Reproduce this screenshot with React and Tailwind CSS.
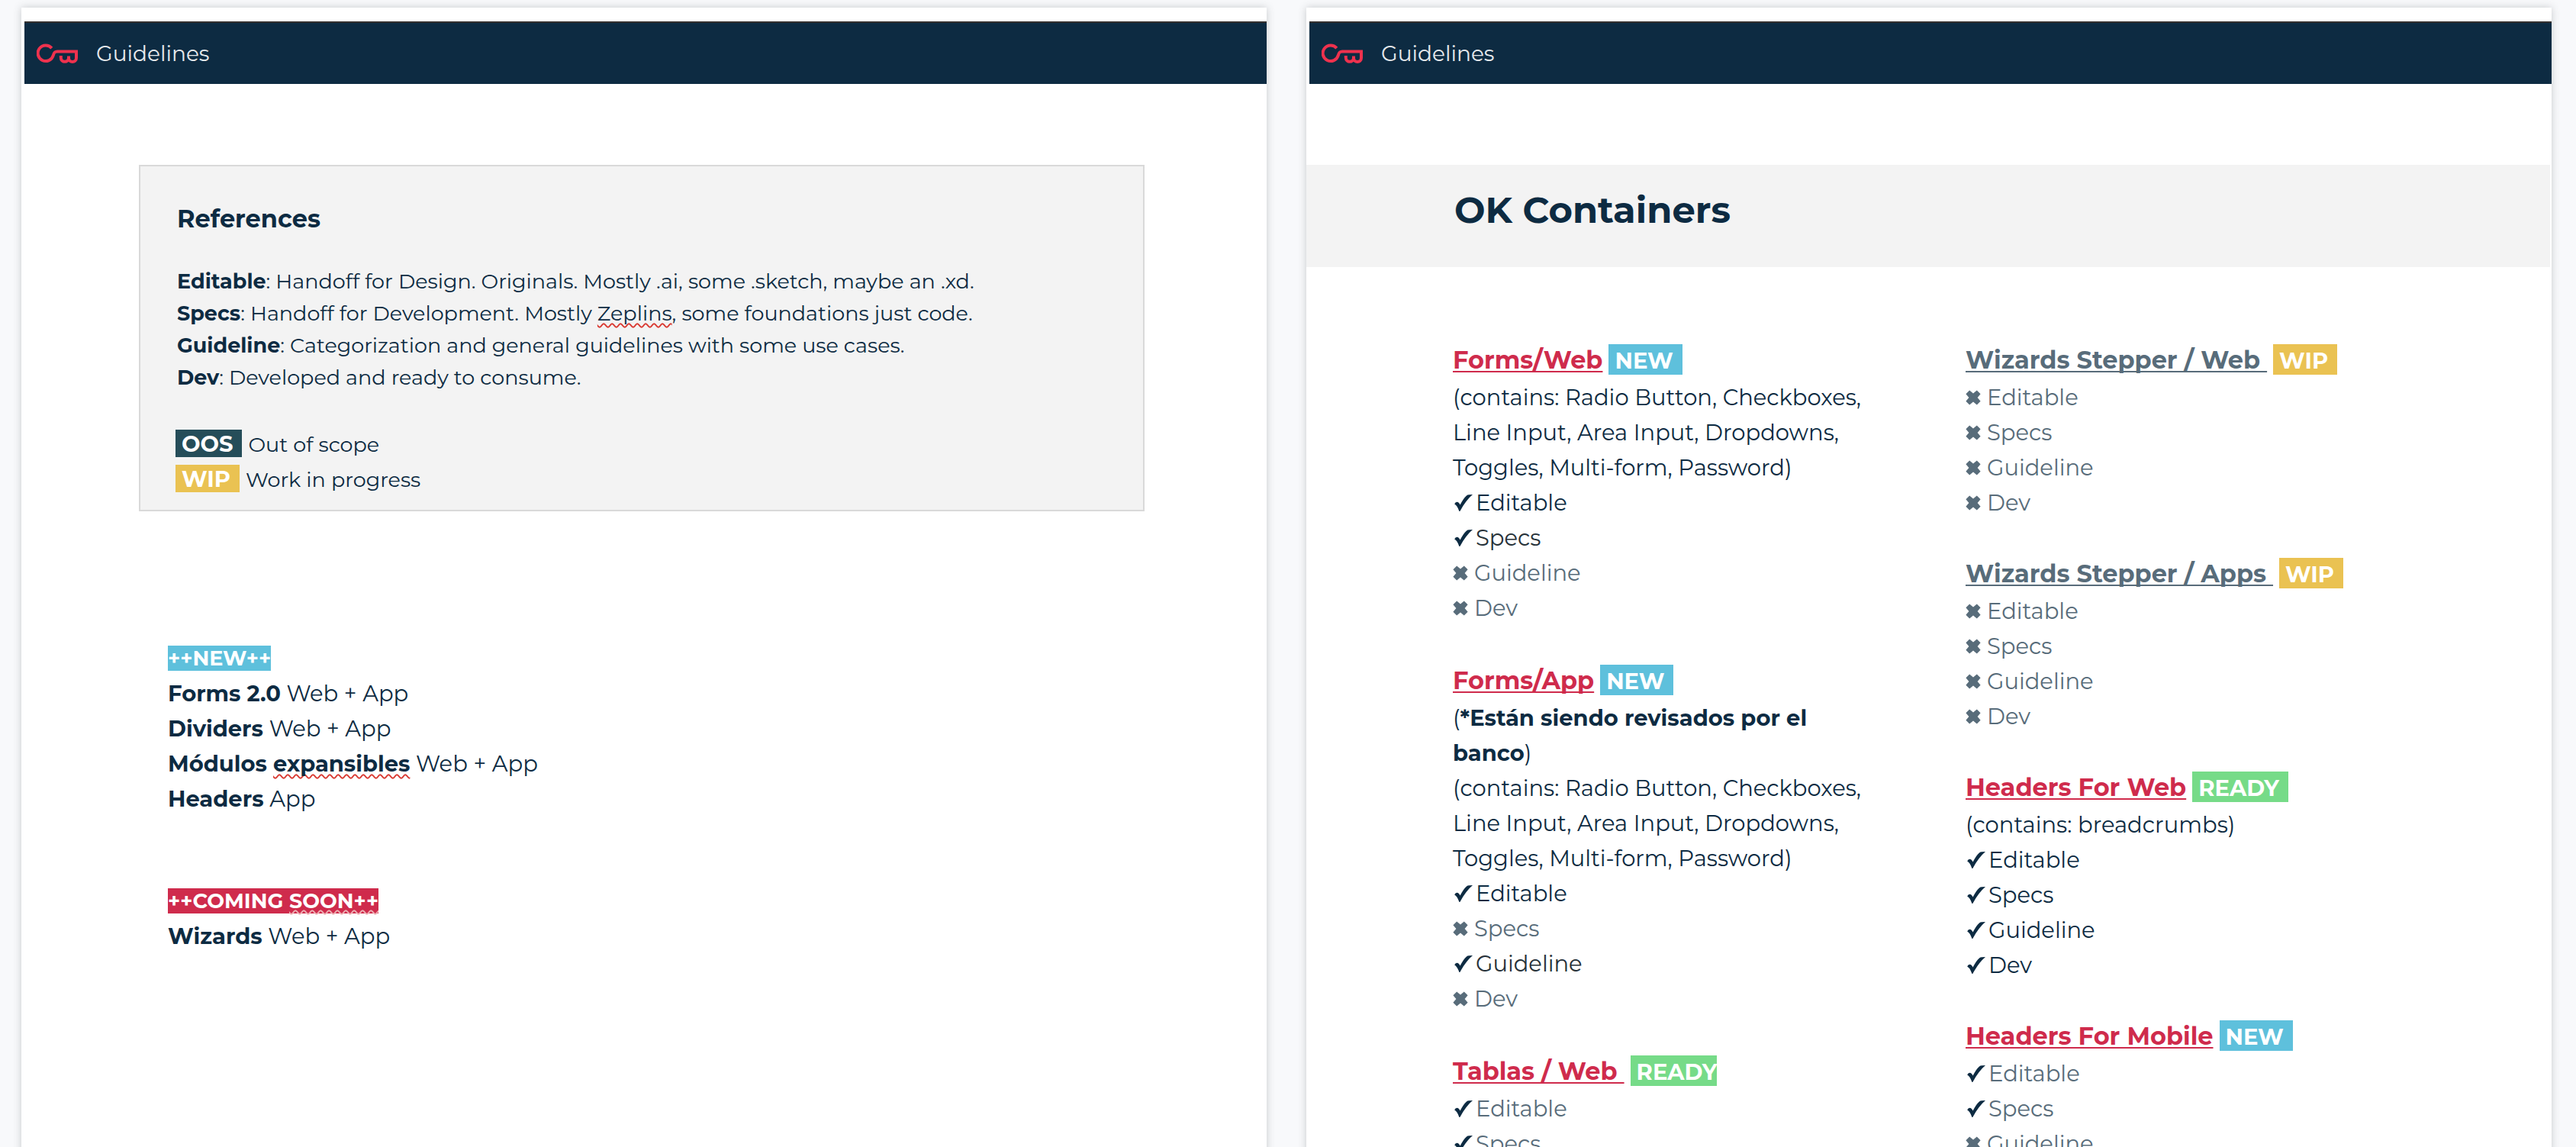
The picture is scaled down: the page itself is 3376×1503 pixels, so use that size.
const TONES = {
  navy: "text-[#0d2b42]",
  dark: "text-[#263138]",
  grey: "text-[#586c7a]",
  red: "text-[#cf2b4c]",
};

const BADGES = {
  NEW: "bg-[#5ec0dc]",
  READY: "bg-[#76db88]",
  WIP: "bg-[#eac252]",
};

const CONTAINS =
  "(contains: Radio Button, Checkboxes, Line Input, Area Input, Dropdowns, Toggles, Multi-form, Password)";

const LEFT_GROUPS = [
  {
    title: "Forms/Web",
    badge: "NEW",
    tone: "red",
    notes: [CONTAINS],
    items: [
      ["Editable", true, "navy"],
      ["Specs", true, "dark"],
      ["Guideline", false, "grey"],
      ["Dev", false, "grey"],
    ],
  },
  {
    title: "Forms/App",
    badge: "NEW",
    tone: "red",
    notes: [
      <>
        (<b>*Están siendo revisados por el banco</b>)
      </>,
      CONTAINS,
    ],
    items: [
      ["Editable", true, "navy"],
      ["Specs", false, "grey"],
      ["Guideline", true, "dark"],
      ["Dev", false, "grey"],
    ],
  },
  {
    title: "Tablas / Web ",
    badge: "READY",
    flush: true,
    tone: "red",
    notes: [],
    items: [
      ["Editable", true, "grey"],
      ["Specs", true, "grey"],
    ],
  },
];

const RIGHT_GROUPS = [
  {
    title: "Wizards Stepper / Web ",
    badge: "WIP",
    tone: "grey",
    notes: [],
    items: [
      ["Editable", false, "grey"],
      ["Specs", false, "grey"],
      ["Guideline", false, "grey"],
      ["Dev", false, "grey"],
    ],
  },
  {
    title: "Wizards Stepper / Apps ",
    badge: "WIP",
    tone: "grey",
    notes: [],
    items: [
      ["Editable", false, "grey"],
      ["Specs", false, "grey"],
      ["Guideline", false, "grey"],
      ["Dev", false, "grey"],
    ],
  },
  {
    title: "Headers For Web",
    badge: "READY",
    tone: "red",
    notes: ["(contains: breadcrumbs)"],
    items: [
      ["Editable", true, "navy"],
      ["Specs", true, "navy"],
      ["Guideline", true, "navy"],
      ["Dev", true, "navy"],
    ],
  },
  {
    title: "Headers For Mobile",
    badge: "NEW",
    tone: "red",
    notes: [],
    items: [
      ["Editable", true, "grey"],
      ["Specs", true, "grey"],
      ["Guideline", false, "grey"],
    ],
  },
];

function KeyLogo() {
  return (
    <svg
      className="h-[26px] w-[54px] shrink-0"
      viewBox="0 0 54 26"
      fill="none"
      stroke="#ee324e"
      strokeWidth="4"
      aria-hidden="true"
    >
      <path d="M19.8 6.1A10.3 10.3 0 1 0 21.9 15.3C22.8 12 23.6 10.6 27 10.6H52V19C52 25.6 42 25.6 42 19V16.5" />
      <path d="M31.8 16V18.5C31.8 25.6 42 25.6 42 18.5" />
    </svg>
  );
}

function Check() {
  return (
    <svg className="ml-0.5 h-[22px] w-6" viewBox="0 0 24 22" fill="#0d2b42" role="img" aria-label="Done">
      <path d="M.2 12.6Q1.2 10 3.4 9.8Q6 9.8 7.6 13.6Q12 4.6 16 1.4Q17.4 .2 19.2 .2L24 .1Q15.4 7.4 7.6 21.4Q6.8 22.4 6.2 21.4Q3.6 14.4 .2 12.6Z" />
    </svg>
  );
}

function Cross() {
  return (
    <svg className="h-5 w-5" viewBox="0 0 20 20" fill="#586c7a" role="img" aria-label="Missing">
      <path d="M5.2 .4L10 4.6L14.8 .4L19.6 5.2L15.6 10L19.6 14.8L14.8 19.6L10 15.4L5.2 19.6L.4 14.8L4.4 10L.4 5.2Z" />
    </svg>
  );
}

function Header() {
  return (
    <header className="mt-[18px] ml-1 flex h-[82px] items-center gap-6 border-t-2 border-[#33302f] bg-[#0d2b42] pl-4">
      <KeyLogo />
      <span className="text-[28px] leading-9 text-[#e6e9ec]">Guidelines</span>
    </header>
  );
}

function Group({ title, badge, flush, tone, notes, items }) {
  return (
    <section>
      <h2 className="mb-0.5 flex items-baseline gap-2 text-[32px] leading-12 font-bold">
        <a
          href="#"
          className={`${TONES[tone]} whitespace-pre underline decoration-2 underline-offset-3 [text-decoration-skip-ink:none]`}
        >
          {title}
        </a>
        <span
          className={`${BADGES[badge]} ${flush ? "pr-0" : "pr-3"} pt-1 pl-2 text-[29px] leading-9 text-white`}
        >
          {badge}
        </span>
      </h2>
      {notes.map((note, i) => (
        <p key={i}>{note}</p>
      ))}
      <ul>
        {items.map(([label, done, color]) => (
          <li key={label} className={`${TONES[color]} flex items-center`}>
            <span className={done ? "w-[30px]" : "w-7"}>{done ? <Check /> : <Cross />}</span>
            {label}
          </li>
        ))}
      </ul>
    </section>
  );
}

function Typo({ children }) {
  return (
    <span className="underline decoration-[#d93a32] decoration-wavy decoration-2 underline-offset-3 [text-decoration-skip-ink:none]">
      {children}
    </span>
  );
}

function Page({ children }) {
  return (
    <article className="min-w-0 flex-1 bg-white shadow-[0_0_10px_rgba(60,64,67,0.25)]">
      <Header />
      {children}
    </article>
  );
}

export default function App() {
  return (
    <div className="h-screen overflow-hidden bg-[#f8f9fb] font-['Montserrat','Inter',sans-serif] text-[29px] leading-[46px] text-[#0d2b42]">
      <main className="flex min-h-full gap-[52px] pt-2.5 pr-8 pl-7">
        <Page>
          <section className="mt-[106px] mr-40 ml-[154px] border-2 border-[#d9d9d9] bg-[#f3f3f3] px-[46px] pt-12 pb-4">
            <div className="pl-0.5">
              <h2 className="text-[32px] leading-[42px] font-bold">References</h2>
              <div className="mt-10 text-[27px] leading-[42px]">
                <p>
                  <b>Editable</b>: Handoff for Design. Originals. Mostly .ai, some .sketch, maybe an .xd.
                </p>
                <p>
                  <b>Specs</b>: Handoff for Development. Mostly <Typo>Zeplins</Typo>, some foundations just code.
                </p>
                <p>
                  <b>Guideline</b>: Categorization and general guidelines with some use cases.
                </p>
                <p>
                  <b>Dev</b>: Developed and ready to consume.
                </p>
              </div>
            </div>
            <div className="mt-11 text-[27px] leading-[46px]">
              <p className="flex items-baseline gap-2">
                <b className="bg-[#254d59] pt-0.5 pr-3 pl-2 text-[29px] leading-[34px] text-white">OOS</b>
                Out of scope
              </p>
              <p className="flex items-baseline gap-2">
                <b className="bg-[#eac252] pt-0.5 pr-3 pl-2 text-[29px] leading-[34px] text-white">WIP</b>
                Work in progress
              </p>
            </div>
          </section>
          <section className="mt-[170px] pl-48">
            <h3 className="text-[27px] font-bold text-white">
              <span className="bg-[#5ec0dc]">++NEW++</span>
            </h3>
            <p>
              <b>Forms 2.0</b> Web + App
            </p>
            <p>
              <b>Dividers</b> Web + App
            </p>
            <p>
              <b>
                Módulos <Typo>expansibles</Typo>
              </b>{" "}
              Web + App
            </p>
            <p>
              <b>Headers</b> App
            </p>
          </section>
          <section className="mt-[88px] pl-48">
            <h3 className="text-[27px] font-bold text-white">
              <span className="bg-[#cf2b4c]">
                ++COMING{" "}
                <span className="underline decoration-[#eeb0b4] decoration-wavy decoration-2 underline-offset-2 [text-decoration-skip-ink:none]">
                  SOON++
                </span>
              </span>
            </h3>
            <p>
              <b>Wizards</b> Web + App
            </p>
          </section>
        </Page>
        <Page>
          <div className="mt-[106px] mr-0.5 bg-[#f3f3f3] pt-[29px] pb-[45px] pl-[194px]">
            <h1 className="text-[48px] leading-[60px] font-bold">OK Containers</h1>
          </div>
          <div className="grid grid-cols-2 gap-28 pt-[98px] pr-52 pl-48">
            <div className="flex flex-col gap-12">
              {LEFT_GROUPS.map((g) => (
                <Group key={g.title} {...g} />
              ))}
            </div>
            <div className="flex flex-col gap-[46px]">
              {RIGHT_GROUPS.map((g) => (
                <Group key={g.title} {...g} />
              ))}
            </div>
          </div>
        </Page>
      </main>
    </div>
  );
}
